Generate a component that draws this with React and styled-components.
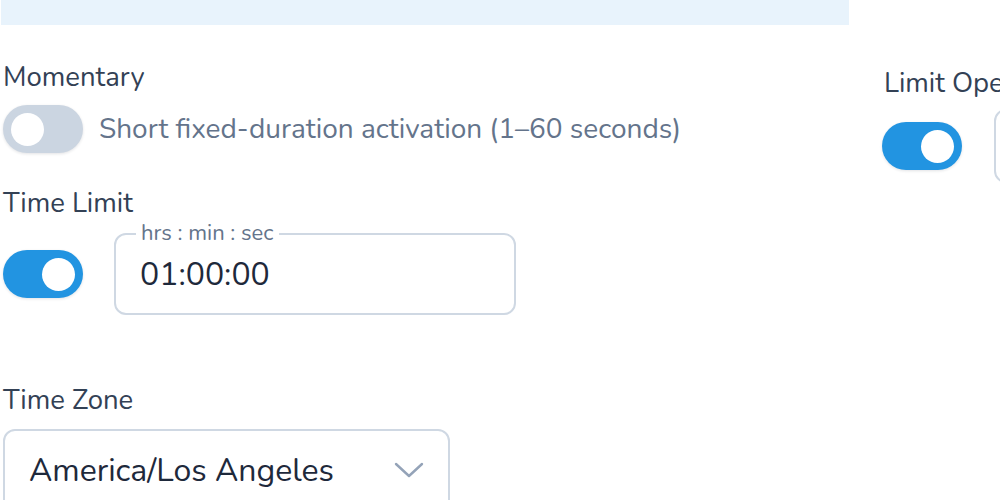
import React from "react";
import styled, { createGlobalStyle } from "styled-components";

const Global = createGlobalStyle`
  html, body { margin: 0; padding: 0; background: #ffffff; overflow: hidden; }
  body { font-family: "Nunito", "Lato", "Noto Sans", sans-serif; }
  * { box-sizing: border-box; }
`;

const Page = styled.div`
  display: grid;
  grid-template-columns: 848px 1fr;
  column-gap: 33px;
  padding-left: 1px;
  width: 1000px;
  height: 500px;
  overflow: hidden;
`;

const Column = styled.div`
  display: flex;
  flex-direction: column;
  align-items: flex-start;
  padding-top: ${(p) => p.$top || 0}px;
  min-width: 0;
`;

const InfoBar = styled.div`
  align-self: stretch;
  height: 25px;
  background: #e8f3fc;
`;

const Label = styled.div`
  font-size: 27.5px;
  line-height: 32px;
  color: #334155;
  margin-top: ${(p) => p.$mt}px;
  padding-left: 2px;
  white-space: nowrap;
`;

const Row = styled.div`
  display: flex;
  align-items: center;
  gap: ${(p) => p.$gap}px;
  margin-top: ${(p) => p.$mt}px;
  padding-left: ${(p) => p.$pl || 0}px;
`;

const Toggle = styled.div`
  position: relative;
  width: 80px;
  height: 48px;
  flex: none;
  border-radius: 24px;
  background: ${(p) => (p.$on ? "#2294e1" : "#cbd5e1")};
  box-shadow: 0 1px 3px rgba(15, 23, 42, 0.12);
  display: flex;
  align-items: center;
  justify-content: ${(p) => (p.$on ? "flex-end" : "flex-start")};
  padding: 0 8px;
`;

const Thumb = styled.div`
  width: 33px;
  height: 33px;
  border-radius: 50%;
  background: #ffffff;
`;

const Description = styled.div`
  font-size: 28px;
  color: #64748b;
  white-space: nowrap;
`;

const Field = styled.div`
  position: relative;
  width: ${(p) => p.$w}px;
  height: ${(p) => p.$h}px;
  border: 2px solid #cfd8e3;
  border-radius: 12px;
  display: flex;
  align-items: center;
  padding-left: ${(p) => p.$pl}px;
  padding-right: 24px;
  background: #fff;
  flex: none;
`;

const Legend = styled.span`
  position: absolute;
  top: -14px;
  left: 20px;
  padding: 0 5px;
  background: #fff;
  font-size: 22px;
  line-height: 24px;
  color: #64748b;
  white-space: nowrap;
`;

const Value = styled.span`
  font-size: 32px;
  color: #1e293b;
  flex: 1;
  white-space: nowrap;
`;

const Chevron = styled.svg`
  width: 30px;
  height: 16px;
  flex: none;
`;

export default function App() {
  return (
    <>
      <Global />
      <Page>
        <Column>
          <InfoBar />
          <Label $mt={36}>Momentary</Label>
          <Row $gap={16} $mt={12} $pl={2}>
            <Toggle>
              <Thumb />
            </Toggle>
            <Description>Short fixed-duration activation (1–60 seconds)</Description>
          </Row>
          <Label $mt={34}>Time Limit</Label>
          <Row $gap={31} $mt={14} $pl={2}>
            <Toggle $on>
              <Thumb />
            </Toggle>
            <Field $w={402} $h={82} $pl={24}>
              <Legend>hrs : min : sec</Legend>
              <Value>01:00:00</Value>
            </Field>
          </Row>
          <Label $mt={69}>Time Zone</Label>
          <Row $mt={13} $pl={2}>
            <Field $w={447} $h={82} $pl={24}>
              <Value>America/Los Angeles</Value>
              <Chevron viewBox="0 0 30 16" fill="none">
                <path d="M2 2 L15 14 L28 2" stroke="#94a3b8" strokeWidth="2.4" strokeLinecap="round" strokeLinejoin="round" />
              </Chevron>
            </Field>
          </Row>
        </Column>
        <Column $top={67}>
          <Label $mt={0}>Limit Operating Hours</Label>
          <Row $gap={32} $mt={10}>
            <Toggle $on>
              <Thumb />
            </Toggle>
            <Field $w={300} $h={74} $pl={24}>
              <Value>08:00</Value>
            </Field>
          </Row>
        </Column>
      </Page>
    </>
  );
}
